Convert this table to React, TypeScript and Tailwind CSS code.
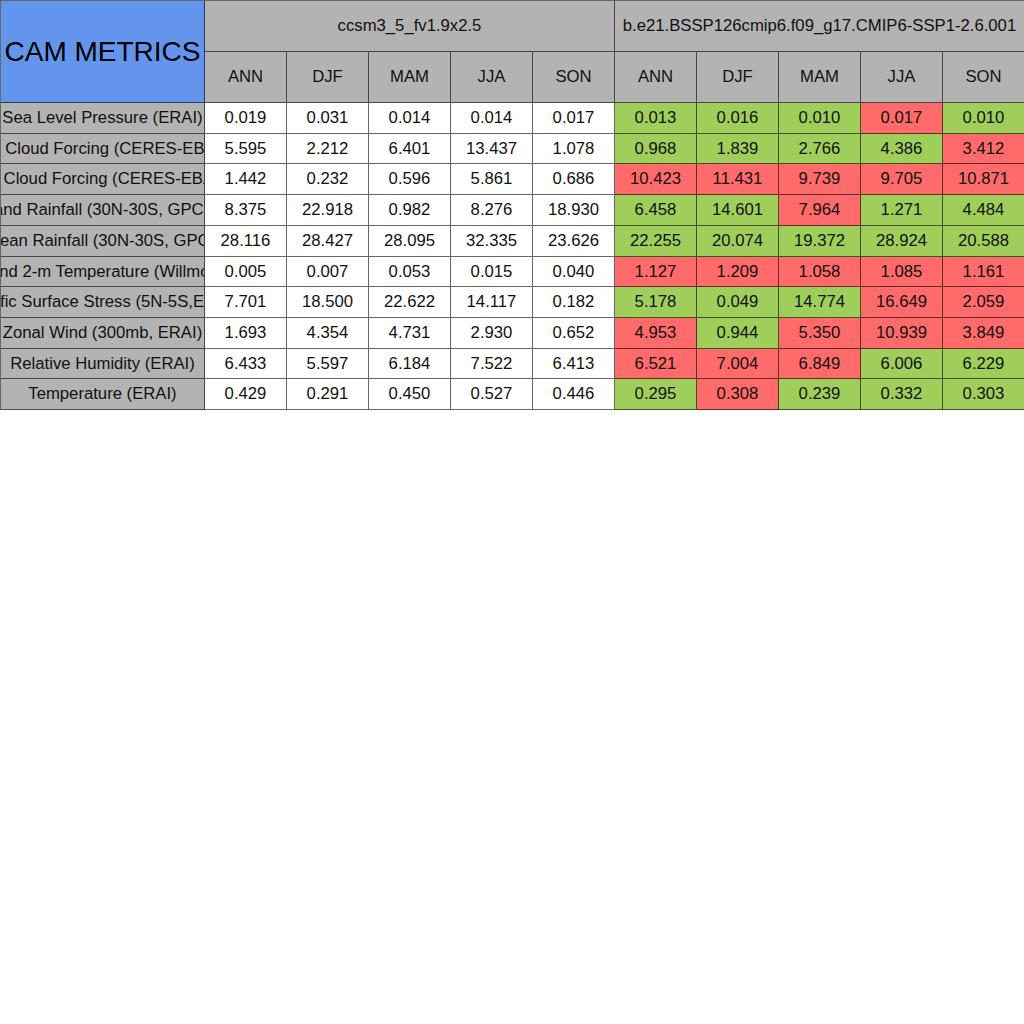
import React from 'react';

const seasons = ['ANN', 'DJF', 'MAM', 'JJA', 'SON'];

const metrics: { label: string; base: string[]; test: string[] }[] = [
  {
    label: 'Sea Level Pressure (ERAI)',
    base: ['0.019', '0.031', '0.014', '0.014', '0.017'],
    test: ['0.013', '0.016', '0.010', '0.017', '0.010'],
  },
  {
    label: 'SW Cloud Forcing (CERES-EBAF)',
    base: ['5.595', '2.212', '6.401', '13.437', '1.078'],
    test: ['0.968', '1.839', '2.766', '4.386', '3.412'],
  },
  {
    label: 'LW Cloud Forcing (CERES-EBAF)',
    base: ['1.442', '0.232', '0.596', '5.861', '0.686'],
    test: ['10.423', '11.431', '9.739', '9.705', '10.871'],
  },
  {
    label: 'Land Rainfall (30N-30S, GPCP)',
    base: ['8.375', '22.918', '0.982', '8.276', '18.930'],
    test: ['6.458', '14.601', '7.964', '1.271', '4.484'],
  },
  {
    label: 'Ocean Rainfall (30N-30S, GPCP)',
    base: ['28.116', '28.427', '28.095', '32.335', '23.626'],
    test: ['22.255', '20.074', '19.372', '28.924', '20.588'],
  },
  {
    label: 'Land 2-m Temperature (Willmott)',
    base: ['0.005', '0.007', '0.053', '0.015', '0.040'],
    test: ['1.127', '1.209', '1.058', '1.085', '1.161'],
  },
  {
    label: 'Pacific Surface Stress (5N-5S,ERAI)',
    base: ['7.701', '18.500', '22.622', '14.117', '0.182'],
    test: ['5.178', '0.049', '14.774', '16.649', '2.059'],
  },
  {
    label: 'Zonal Wind (300mb, ERAI)',
    base: ['1.693', '4.354', '4.731', '2.930', '0.652'],
    test: ['4.953', '0.944', '5.350', '10.939', '3.849'],
  },
  {
    label: 'Relative Humidity (ERAI)',
    base: ['6.433', '5.597', '6.184', '7.522', '6.413'],
    test: ['6.521', '7.004', '6.849', '6.006', '6.229'],
  },
  {
    label: 'Temperature (ERAI)',
    base: ['0.429', '0.291', '0.450', '0.527', '0.446'],
    test: ['0.295', '0.308', '0.239', '0.332', '0.303'],
  },
];

const cell =
  'flex items-center justify-center overflow-hidden whitespace-nowrap border-r border-b border-black/60';

export default function App() {
  return (
    <div className="w-[1024px] overflow-hidden bg-white font-['Liberation_Sans',Arial,sans-serif] text-[16.7px] text-[#111]">
      <div className="grid w-[1025px] grid-cols-[204px_repeat(10,82px)] grid-rows-[51px_51px_31px_30px_31px_31px_31px_30px_31px_31px_30px_31px] border-t border-l border-black/60">
        <div className={`${cell} row-span-2 bg-[#6495ed] text-[28px] text-black`}>
          CAM METRICS
        </div>
        <div className={`${cell} col-span-5 bg-[#b3b3b3]`}>ccsm3_5_fv1.9x2.5</div>
        <div className={`${cell} col-span-5 bg-[#b3b3b3]`}>
          b.e21.BSSP126cmip6.f09_g17.CMIP6-SSP1-2.6.001
        </div>
        {[...seasons, ...seasons].map((s, i) => (
          <div key={i} className={`${cell} bg-[#b3b3b3]`}>
            {s}
          </div>
        ))}

        {metrics.map((m) => (
          <React.Fragment key={m.label}>
            <div className={`${cell} bg-[#b3b3b3]`}>{m.label}</div>
            {m.base.map((v, i) => (
              <div key={'b' + i} className={`${cell} bg-white`}>
                {v}
              </div>
            ))}
            {m.test.map((v, i) => (
              <div
                key={'t' + i}
                className={`${cell} ${
                  parseFloat(v) < parseFloat(m.base[i]) ? 'bg-[#9fce5a]' : 'bg-[#ff6a6a]'
                }`}
              >
                {v}
              </div>
            ))}
          </React.Fragment>
        ))}
      </div>
    </div>
  );
}
